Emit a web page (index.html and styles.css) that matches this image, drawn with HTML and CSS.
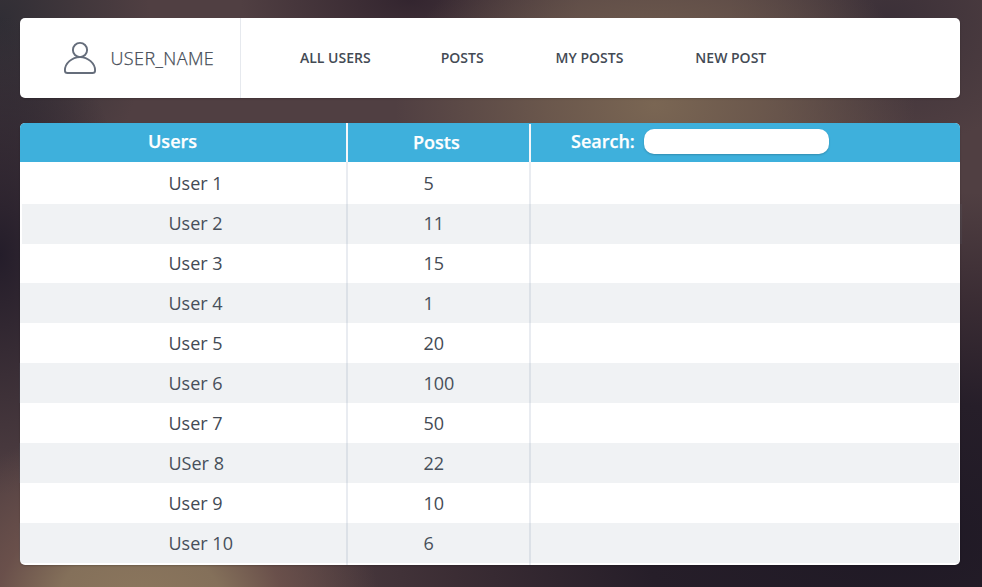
FILE: index.html
```html
<!DOCTYPE html>
<html lang="en">
<head>
<meta charset="utf-8">
<title>Users</title>
<link rel="stylesheet" href="styles.css">
</head>
<body>
<header class="topbar">
  <div class="profile">
    <svg class="avatar" viewBox="0 0 34 34" fill="none" stroke="#656d7b" stroke-width="1.9" stroke-linejoin="round"><circle cx="17" cy="9" r="7.1"/><path d="M17 16.1C8.800 16.100 1.900 22.500 1.900 29.400Q1.900 32 4.600 32H29.400Q32.100 32 32.100 29.400C32.100 22.500 25.200 16.100 17 16.100Z"/></svg>
    <span class="name">USER_NAME</span>
  </div>
  <nav class="menu">
    <a>ALL USERS</a><a>POSTS</a><a>MY POSTS</a><a>NEW POST</a>
  </nav>
</header>
<main class="table">
  <div class="head">
    <div class="col-user">Users</div>
    <div class="col-posts">Posts</div>
    <label class="search">Search: <input class="field" type="text"></label>
  </div>
  <div class="row first"><div class="col-user">User 1</div><div class="col-posts">5</div></div>
  <div class="row alt right"><div class="col-user">User 2</div><div class="col-posts">11</div></div>
  <div class="row short"><div class="col-user">User 3</div><div class="col-posts">15</div></div>
  <div class="row alt"><div class="col-user">User 4</div><div class="col-posts">1</div></div>
  <div class="row"><div class="col-user">User 5</div><div class="col-posts">20</div></div>
  <div class="row alt left"><div class="col-user">User 6</div><div class="col-posts">100</div></div>
  <div class="row"><div class="col-user">User 7</div><div class="col-posts">50</div></div>
  <div class="row alt left"><div class="col-user">USer 8</div><div class="col-posts">22</div></div>
  <div class="row"><div class="col-user">User 9</div><div class="col-posts">10</div></div>
  <div class="row alt left last"><div class="col-user">User 10</div><div class="col-posts">6</div></div>
</main>
</body>
</html>
```
FILE: styles.css
```css
* { box-sizing: border-box; }
body {
  margin: 0;
  height: 587px;
  overflow: hidden;
  padding: 18px 22px 22px 20px;
  font-family: "Open Sans", sans-serif;
  font-size: 18px;
  color: #434a54;
  background:
    radial-gradient(ellipse 240px 190px at 140px 610px, #8c775d 0%, #84705a 35%, rgba(112, 84, 77, .8) 60%, rgba(80, 63, 66, 0) 100%),
    radial-gradient(ellipse 260px 190px at 655px 105px, #7a6653 0%, rgba(114, 94, 79, .8) 40%, rgba(80, 63, 66, 0) 100%),
    radial-gradient(ellipse 170px 80px at 410px 0, #33252f 0%, rgba(51, 37, 47, 0) 100%),
    radial-gradient(ellipse 160px 130px at 890px 20px, #3b3038 0%, rgba(59, 48, 56, 0) 100%),
    radial-gradient(ellipse 130px 240px at 0 255px, #241d2a 0%, rgba(36, 29, 42, 0) 100%),
    radial-gradient(ellipse 150px 190px at 0 20px, #302e35 0%, rgba(48, 46, 53, 0) 100%),
    radial-gradient(ellipse 640px 350px at 900px 540px, #1f1925 0%, #261e29 40%, rgba(50, 37, 46, .7) 70%, rgba(60, 45, 50, 0) 100%),
    #503f42;
}
.topbar {
  display: flex;
  height: 80px;
  margin-bottom: 25px;
  background: #fff;
  border-radius: 5px;
  box-shadow: 0 1px 2px rgba(0, 0, 0, .2);
}
.profile {
  display: flex;
  align-items: center;
  width: 221px;
  padding-left: 43px;
  border-right: 1px solid #e6e9ee;
}
.avatar { width: 34px; height: 34px; margin-right: 13.5px; }
.name { font-weight: 300; letter-spacing: .4px; -webkit-text-stroke: .25px #434a54; }
.menu {
  display: flex;
  align-items: center;
  gap: 70px;
  padding: 0 0 2px 59px;
  font-size: 14px;
  font-weight: 600;
}
.menu a:nth-child(n + 3) { margin-left: 2px; }
.table {
  height: 442px;
  background: #fff;
  border-radius: 5px;
  box-shadow: 0 1px 2px rgba(0, 0, 0, .2);
}
.head, .row { display: grid; grid-template-columns: 328px 183px 1fr; }
.head {
  height: 39px;
  line-height: 37px;
  color: #fff;
  font-weight: 600;
  -webkit-text-stroke: .25px #fff;
  background: #3eb0dc;
  border-radius: 5px 5px 0 0;
}
.head .col-user { padding-left: 128px; border-right: 2px solid #f5f7fa; }
.head .col-posts {
  margin-top: 1px;
  padding-left: 65px;
  border-right: 2px solid #f5f7fa;
}
.search { display: flex; padding-left: 40px; }
.field {
  width: 185px;
  height: 25px;
  margin: 6px 131px 0 auto;
  padding: 0 10px;
  border: 0;
  border-radius: 10px;
  background: #fff;
  font: inherit;
  box-shadow: 0 1px 2px rgba(0, 0, 0, .2);
}
.row { height: 40px; line-height: 40px; position: relative; }
.row .col-user { padding-left: 148.500px; border-right: 2px solid #e9ecf1; }
.row .col-posts { padding-left: 75.500px; border-right: 2px solid #e9ecf1; }
.row.first { height: 42px; line-height: 43px; }
.row.right { line-height: 38px; }
.row.short { height: 39px; line-height: 38px; }
.row.last { height: 42px; }
.alt::after {
  content: "";
  position: absolute;
  inset: 0;
  background: rgba(110, 130, 150, .1);
}
.alt.right::after { left: 2px; right: -2px; }
.alt.left::after { left: -1px; right: 1px; }
.alt.last::after { bottom: 2px; border-radius: 0 0 0 4px; }
```
